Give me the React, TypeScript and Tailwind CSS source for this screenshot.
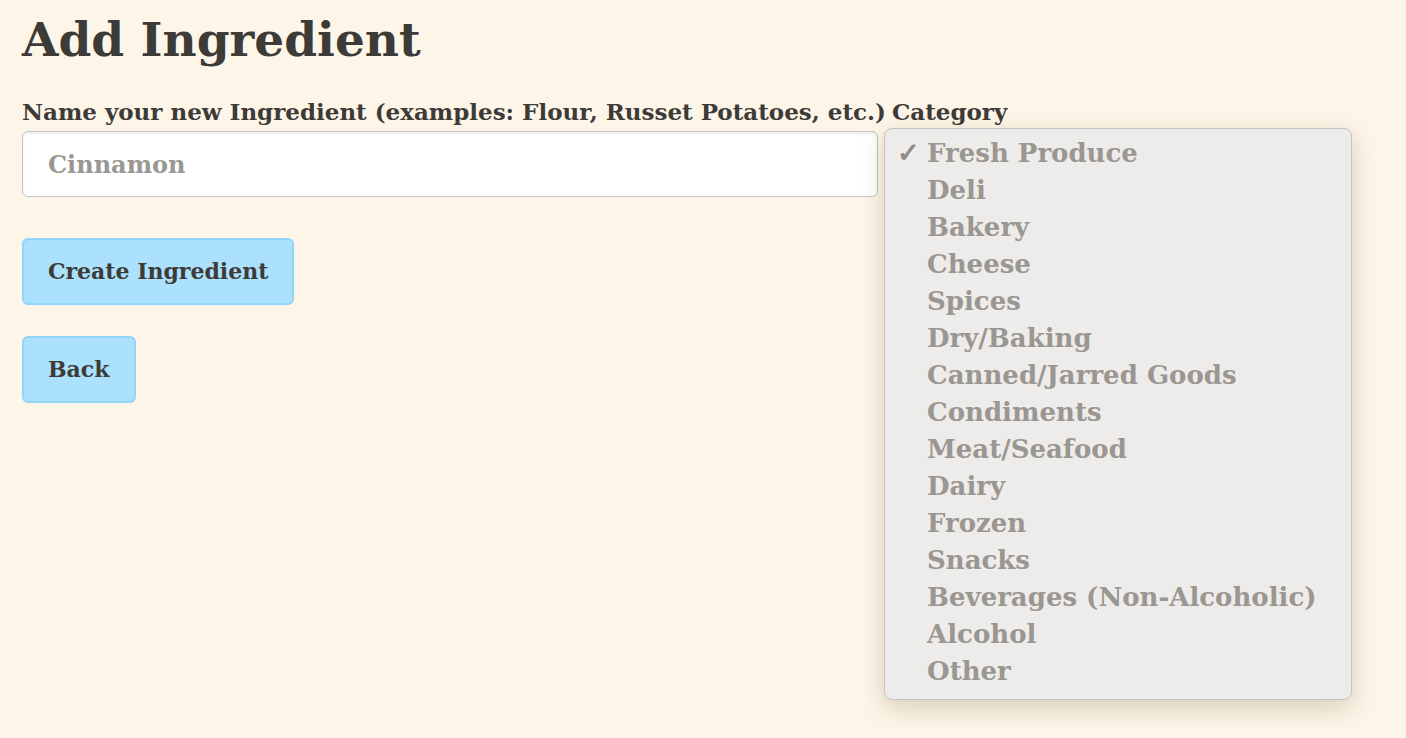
import React from "react";

const categories = [
  "Fresh Produce",
  "Deli",
  "Bakery",
  "Cheese",
  "Spices",
  "Dry/Baking",
  "Canned/Jarred Goods",
  "Condiments",
  "Meat/Seafood",
  "Dairy",
  "Frozen",
  "Snacks",
  "Beverages (Non-Alcoholic)",
  "Alcohol",
  "Other",
];

const slab = { fontFamily: '"DejaVu Serif", "Liberation Serif", serif' };

export default function App() {
  return (
    <div className="min-h-[738px] w-full bg-[#fdf5e8] px-[22px] pt-[10px] text-[#3d3b37]" style={slab}>
      {/* Title */}
      <h1 className="text-[47px] font-bold leading-[60px]">Add Ingredient</h1>

      {/* Form */}
      <form className="mt-[22px]">
        <div className="flex text-[23px] font-bold leading-[39px]">
          <label>Name your new Ingredient (examples: Flour, Russet Potatoes, etc.)</label>
          <label className="ml-[6px]">Category</label>
        </div>

        <div className="flex items-start">
          <input
            placeholder="Cinnamon"
            className="h-[66px] w-[856px] rounded-[6px] border border-[#c1c6c6] bg-white px-[25px] text-[24px] font-bold text-[#3d3b37] shadow-[inset_0_2px_3px_rgba(0,0,0,0.08)] outline-none placeholder:text-[#9a9793]"
            style={slab}
          />

          {/* Open native select menu */}
          <div className="relative ml-[6px]">
            <div className="absolute left-0 top-[-3px] z-10 w-[468px] rounded-[8px] border border-[#c5c3bf] bg-[#edecea] pb-[9px] pt-[6px] shadow-[0_8px_24px_rgba(90,70,30,0.22)]" style={slab}>
              {categories.map((c, i) => (
                <div key={c} className="relative flex h-[37px] items-center pl-[42px] text-[26px] font-bold text-[#9a9691]">
                  {i === 0 && <span className="absolute left-[12px] text-[27px] text-[#8e8a85]">✓</span>}
                  {c}
                </div>
              ))}
            </div>
          </div>
        </div>

        <div className="mt-[41px] flex flex-col items-start gap-[31px]">
          <button type="button" className="h-[67px] rounded-[6px] border-2 border-[#92d5fb] bg-[#abe1fd] px-[24px] text-[22px] font-bold text-[#3d3b37]" style={slab}>
            Create Ingredient
          </button>
          <button type="button" className="h-[67px] rounded-[6px] border-2 border-[#92d5fb] bg-[#abe1fd] px-[24px] text-[22px] font-bold text-[#3d3b37]" style={slab}>
            Back
          </button>
        </div>
      </form>
    </div>
  );
}
